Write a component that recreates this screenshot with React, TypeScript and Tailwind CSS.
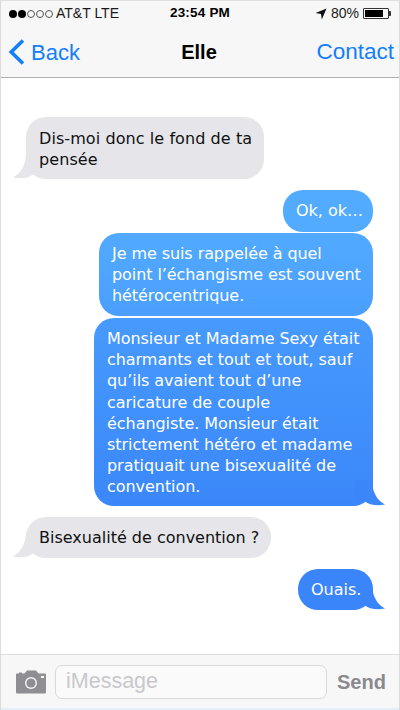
import { ReactNode } from "react";

function Tail({ side, color }: { side: "left" | "right"; color: string }) {
  if (side === "left") {
    return (
      <svg className="absolute left-[-13px] bottom-0" width="30" height="26" viewBox="0 0 30 26">
        <path d="M13 0 C13 10 9 20 0 24.5 C8 26 16 25 21 21 L30 26 L30 0 Z" fill={color} />
      </svg>
    );
  }
  return (
    <svg className="absolute right-[-12px] bottom-0" width="30" height="26" viewBox="0 0 30 26">
      <path d="M17 0 C17 10 21 20 30 24.5 C22 26 14 25 9 21 L0 26 L0 0 Z" fill={color} />
    </svg>
  );
}

function Bubble({
  side,
  tail,
  className,
  tailColor,
  children,
}: {
  side: "left" | "right";
  tail?: boolean;
  className: string;
  tailColor?: string;
  children: ReactNode;
}) {
  return (
    <div className={`relative rounded-[20px] ${className}`}>
      {tail && tailColor && <Tail side={side} color={tailColor} />}
      <p className="relative whitespace-nowrap">{children}</p>
    </div>
  );
}

function Dot({ on }: { on: boolean }) {
  return (
    <span
      className={
        on
          ? "w-[8px] h-[8px] rounded-full bg-black"
          : "w-[8px] h-[8px] rounded-full border border-[#555555]"
      }
    />
  );
}

export default function App() {
  return (
    <div className="w-[400px] h-[710px] flex flex-col bg-white overflow-hidden border-x border-[#dcdcdc] font-['Liberation_Sans',sans-serif]">
      <header className="h-[78px] shrink-0 bg-[#f7f7f7] border-b border-t border-b-[#b0b0b0] border-t-[#e0e0e0]">
        <div className="h-[23px] mt-[1px] flex items-center justify-between pl-[8px] pr-[8px] text-[14px] text-[#1a1a1a]">
          <div className="flex items-center w-[140px]">
            <div className="flex gap-[1px] mr-[3px]">
              <Dot on />
              <Dot on />
              <Dot on={false} />
              <Dot on={false} />
              <Dot on={false} />
            </div>
            <span>AT&amp;T LTE</span>
          </div>
          <span className="font-bold text-black text-[13.5px] tracking-[0.2px]">23:54 PM</span>
          <div className="flex items-center justify-end w-[140px]">
            <svg width="12" height="12" viewBox="0 0 12 12" className="mr-[4px]">
              <path d="M11.5 0.5 L0.5 5 L6 6 L6.8 11.5 Z" fill="#111111" />
            </svg>
            <span>80%</span>
            <div className="ml-[4px] w-[26px] h-[11px] border border-[#333333] p-[1px] rounded-[1px]">
              <div className="h-full w-[80%] bg-black" />
            </div>
            <div className="w-[2px] h-[5px] bg-[#333333] rounded-r-[1px]" />
          </div>
        </div>
        <div className="h-[52px] pt-[2px] flex items-center justify-between pl-[7px] pr-[5px] text-[#147efb]">
          <div className="flex items-center w-[120px]">
            <svg width="18" height="28" viewBox="0 0 18 28">
              <path d="M15 2.5 L3.2 14 L15 25.5" fill="none" stroke="#147efb" strokeWidth="3.6" />
            </svg>
            <span className="ml-[5px] text-[22px]">Back</span>
          </div>
          <span className="text-[20px] font-bold text-black ml-[-4px]">Elle</span>
          <span className="w-[120px] text-right text-[22.5px]">Contact</span>
        </div>
      </header>

      <main className="flex-1 flex flex-col pt-[39px] pl-[25px] pr-[26px] font-['DejaVu_Sans',sans-serif] text-[16px] leading-[21.2px]">
        <div className="self-start">
          <Bubble side="left" tail tailColor="#e5e5ea" className="w-[238px] h-[62px] bg-[#e5e5ea] pl-[13px] pt-[11px] text-[#111111] tracking-[0.08px]">
            Dis-moi donc le fond de ta
            <br />
            pensée
          </Bubble>
        </div>
        <div className="self-end mt-[11px]">
          <Bubble side="right" className="w-[90px] h-[42px] bg-[#52abff] pl-[13px] pt-[10px] text-white">
            Ok, ok…
          </Bubble>
        </div>
        <div className="self-end mt-[1px]">
          <Bubble side="right" className="w-[274px] h-[83px] bg-gradient-to-b from-[#52aaff] to-[#4a9ffe] pl-[13px] pt-[10px] text-white tracking-[-0.08px]">
            Je me suis rappelée à quel
            <br />
            point l’échangisme est souvent
            <br />
            hétérocentrique.
          </Bubble>
        </div>
        <div className="self-end mt-[2px]">
          <Bubble side="right" tail tailColor="#3b87fa" className="w-[279px] h-[188px] bg-gradient-to-b from-[#479afd] to-[#3b87fa] pl-[13px] pt-[10px] text-white tracking-[-0.05px]">
            Monsieur et Madame Sexy était
            <br />
            charmants et tout et tout, sauf
            <br />
            qu’ils avaient tout d’une
            <br />
            caricature de couple
            <br />
            échangiste. Monsieur était
            <br />
            strictement hétéro et madame
            <br />
            pratiquait une bisexualité de
            <br />
            convention.
          </Bubble>
        </div>
        <div className="self-start mt-[11px]">
          <Bubble side="left" tail tailColor="#e5e5ea" className="w-[245px] h-[41px] bg-[#e5e5ea] pl-[13px] pt-[10px] text-[#111111]">
            Bisexualité de convention ?
          </Bubble>
        </div>
        <div className="self-end mt-[11px]">
          <Bubble side="right" tail tailColor="#3a85f9" className="w-[75px] h-[41px] bg-[#3a85f9] pl-[13px] pt-[10px] text-white">
            Ouais.
          </Bubble>
        </div>
      </main>

      <footer className="h-[56px] shrink-0 bg-[#f7f7f7] border-t border-[#dcdcdc] border-b-[2px] border-b-[#e4eef8] flex items-center pl-[14px] pr-[14px]">
        <svg width="32" height="24" viewBox="0 0 32 24" className="shrink-0 mt-[1px]">
          <path
            d="M2 3.5 H4 V2.5 H7 V3.5 H9.5 L12 0.5 H21 L23.5 3.5 H30 Q31 3.5 31 4.5 V22.5 Q31 23.5 30 23.5 H2 Q1 23.5 1 22.5 V4.5 Q1 3.5 2 3.5 Z"
            fill="#8e8e93"
          />
          <circle cx="16" cy="13" r="6" fill="#f7f7f7" />
          <circle cx="16" cy="13" r="4.6" fill="#8e8e93" />
          <rect x="26" y="6" width="3" height="2" fill="#f7f7f7" />
        </svg>
        <div className="ml-[8px] w-[272px] h-[34px] shrink-0 rounded-[7px] border border-[#d8d8d8] bg-[#fafafa] flex items-center pl-[10px] text-[21.5px] text-[#c8c8cc]">
          iMessage
        </div>
        <span className="ml-[10px] text-[20px] font-bold text-[#8a8a8e]">Send</span>
      </footer>
    </div>
  );
}
